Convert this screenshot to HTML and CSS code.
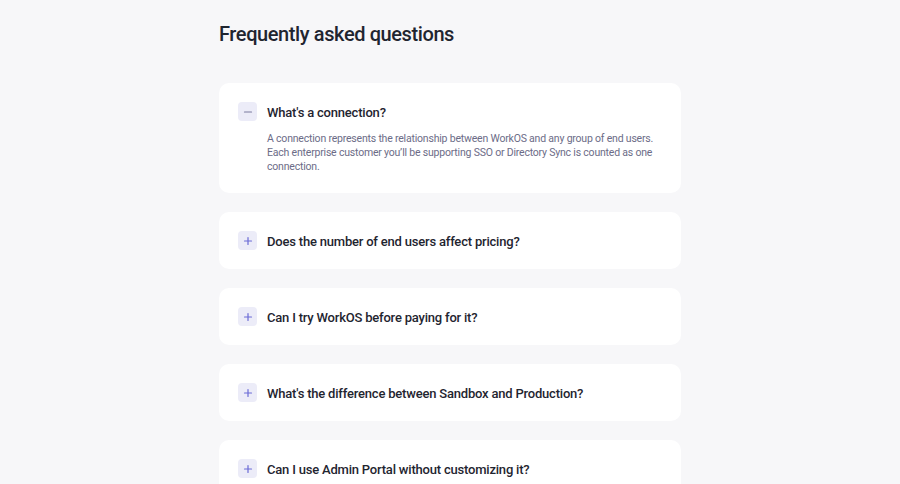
FILE: index.html
```html
<!DOCTYPE html>
<html lang="en">
<head>
<meta charset="utf-8">
<link rel="stylesheet" href="styles.css">
</head>
<body>
<main class="faq">
  <h1 class="faq-title">Frequently asked questions</h1>
  <div class="faq-list">
    <div class="faq-item open">
      <div class="faq-q">
        <span class="faq-icon minus"><svg width="10" height="10" viewBox="0 0 10 10"><path d="M1.5 5h7" stroke="currentColor" stroke-width="1.2" stroke-linecap="round"/></svg></span>
        <span class="faq-q-text">What's a connection?</span>
      </div>
      <p class="faq-a">A connection represents the relationship between WorkOS and any group of end users. Each enterprise customer you’ll be supporting SSO or Directory Sync is counted as one connection.</p>
    </div>
    <div class="faq-item">
      <div class="faq-q">
        <span class="faq-icon"><svg width="10" height="10" viewBox="0 0 10 10"><path d="M1.5 5h7M5 1.5v7" stroke="currentColor" stroke-width="1.2" stroke-linecap="round"/></svg></span>
        <span class="faq-q-text">Does the number of end users affect pricing?</span>
      </div>
    </div>
    <div class="faq-item">
      <div class="faq-q">
        <span class="faq-icon"><svg width="10" height="10" viewBox="0 0 10 10"><path d="M1.5 5h7M5 1.5v7" stroke="currentColor" stroke-width="1.2" stroke-linecap="round"/></svg></span>
        <span class="faq-q-text">Can I try WorkOS before paying for it?</span>
      </div>
    </div>
    <div class="faq-item">
      <div class="faq-q">
        <span class="faq-icon"><svg width="10" height="10" viewBox="0 0 10 10"><path d="M1.5 5h7M5 1.5v7" stroke="currentColor" stroke-width="1.2" stroke-linecap="round"/></svg></span>
        <span class="faq-q-text">What's the difference between Sandbox and Production?</span>
      </div>
    </div>
    <div class="faq-item">
      <div class="faq-q">
        <span class="faq-icon"><svg width="10" height="10" viewBox="0 0 10 10"><path d="M1.5 5h7M5 1.5v7" stroke="currentColor" stroke-width="1.2" stroke-linecap="round"/></svg></span>
        <span class="faq-q-text">Can I use Admin Portal without customizing it?</span>
      </div>
    </div>
  </div>
</main>
</body>
</html>
```
FILE: styles.css
```css
* { box-sizing: border-box; }
html, body { margin: 0; padding: 0; }
body {
  background: #f7f7f9;
  font-family: Roboto, "Noto Sans", sans-serif;
  color: #1d2331;
  overflow: hidden;
}
.faq {
  width: 462px;
  margin: 0 auto;
  padding-top: 20px;
}
.faq-title {
  margin: 0 0 35px 0;
  font-size: 20px;
  line-height: 28px;
  font-weight: 500;
  letter-spacing: -0.4px;
  color: #1f2530;
}
.faq-list {
  display: flex;
  flex-direction: column;
  gap: 19px;
}
.faq-item {
  background: #fff;
  border-radius: 10px;
  padding: 19px 19px;
}
.faq-q {
  display: flex;
  align-items: center;
  gap: 10px;
  height: 19px;
}
.faq-icon {
  width: 19px;
  height: 19px;
  border-radius: 4px;
  background: #ececf8;
  color: #6b6bd6;
  display: flex;
  align-items: center;
  justify-content: center;
  flex: none;
}
.faq-icon.minus { color: #7a7a9e; }
.faq-icon svg { display: block; }
.faq-q-text {
  font-size: 13px;
  line-height: 19px;
  padding-top: 1px;
  font-weight: 500;
  letter-spacing: -0.2px;
  color: #1f2530;
}
.faq-a {
  margin: 11px 0 0 29px;
  font-size: 10.5px;
  line-height: 14px;
  letter-spacing: -0.2px;
  color: #6c6c87;
}
```
